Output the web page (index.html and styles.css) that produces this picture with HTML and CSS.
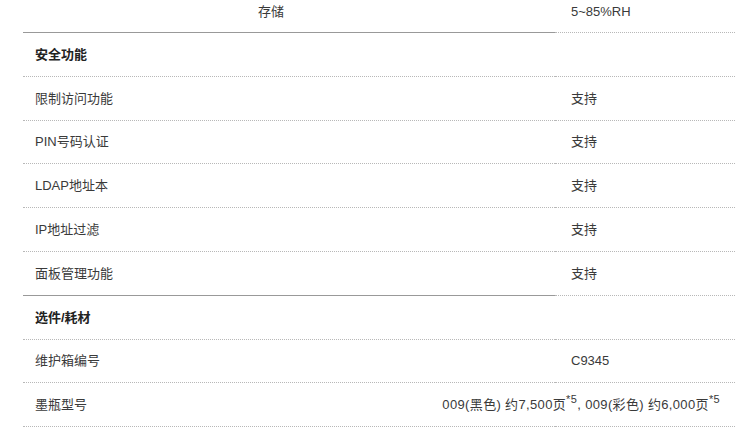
FILE: index.html
```html
<!DOCTYPE html>
<html lang="zh-CN">
<head>
<meta charset="utf-8">
<title>规格</title>
<link rel="stylesheet" href="styles.css">
</head>
<body>
<div class="spec">
  <div class="row row-first">
    <div class="label sub end">存储</div>
    <div class="value">5~85%RH</div>
  </div>
  <div class="row">
    <div class="label head">安全功能</div>
    <div class="value"></div>
  </div>
  <div class="row">
    <div class="label">限制访问功能</div>
    <div class="value">支持</div>
  </div>
  <div class="row">
    <div class="label">PIN号码认证</div>
    <div class="value">支持</div>
  </div>
  <div class="row">
    <div class="label">LDAP地址本</div>
    <div class="value">支持</div>
  </div>
  <div class="row">
    <div class="label">IP地址过滤</div>
    <div class="value">支持</div>
  </div>
  <div class="row">
    <div class="label end">面板管理功能</div>
    <div class="value">支持</div>
  </div>
  <div class="row">
    <div class="label head">选件/耗材</div>
    <div class="value"></div>
  </div>
  <div class="row">
    <div class="label">维护箱编号</div>
    <div class="value">C9345</div>
  </div>
  <div class="row">
    <div class="label">墨瓶型号</div>
    <div class="value wide"><span class="nowrap">009(黑色) 约7,500页<sup>*5</sup>, 009(彩色) 约6,000页<sup>*5</sup></span></div>
  </div>
</div>
</body>
</html>
```

FILE: styles.css
```css
html, body {
  margin: 0;
  padding: 0;
  background: #ffffff;
}

body {
  font-family: "Liberation Sans", "Noto Sans CJK SC", sans-serif;
  font-size: 13px;
  color: #3a3a3a;
}

.spec {
  margin-left: 23px;
  width: 712px;
  display: flex;
  flex-direction: column;
}

.row {
  display: flex;
  height: 43.8px;
}

.row-first {
  height: 33px;
}

.label,
.value {
  display: flex;
  align-items: center;
  border-bottom: 1px dotted #b8b8b8;
  box-sizing: border-box;
  line-height: 19px;
}

.label {
  width: 532px;
  flex-shrink: 0;
  padding-left: 12px;
}

.value {
  flex: 1;
  min-width: 0;
  padding-left: 16px;
}

.row-first .label,
.row-first .value {
  align-items: flex-start;
  padding-top: 2px;
}

.label.sub {
  padding-left: 235px;
}

.label.end {
  border-bottom: 1px solid #999999;
}

.label.head {
  font-weight: bold;
  color: #222222;
}

.value.wide {
  justify-content: flex-end;
  padding-left: 0;
  padding-right: 15px;
}

.nowrap {
  white-space: nowrap;
  flex-shrink: 0;
  letter-spacing: 0.35px;
}

sup {
  font-size: 11px;
  line-height: 0;
  vertical-align: 6px;
}
```
